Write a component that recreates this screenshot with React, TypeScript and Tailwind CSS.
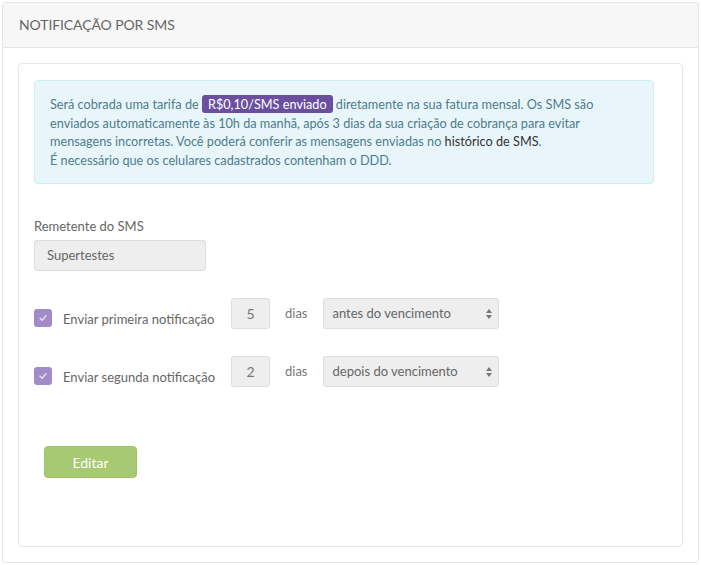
import React from "react";

function Check() {
  return (
    <span className="flex h-[18px] w-[18px] shrink-0 items-center justify-center rounded-[3px] bg-[#a28cc8]">
      <svg width="10" height="10" viewBox="0 0 10 10">
        <path d="M2 5.2 L4.1 7.2 L8 2.8" fill="none" stroke="#e6def2" strokeWidth="1.5" strokeLinecap="round" strokeLinejoin="round" />
      </svg>
    </span>
  );
}

function Arrows() {
  return (
    <svg width="8" height="12" viewBox="0 0 8 12" className="shrink-0">
      <path d="M4 1 L7 5 L1 5 Z" fill="#777" />
      <path d="M4 11 L7 7 L1 7 Z" fill="#777" />
    </svg>
  );
}

function Row({ label, num, sel }: { label: string; num: string; sel: string }) {
  return (
    <div className="flex items-start">
      <div className="mt-[11px] flex h-[18px] w-[197px] shrink-0 items-center gap-[11px]">
        <Check />
        <span className="whitespace-nowrap pt-[1px] text-[13px] leading-[18px] text-[#666]">{label}</span>
      </div>
      <div className="flex items-center">
        <div className="flex h-[31px] w-[39px] items-center justify-center rounded-[3px] border border-[#dddddd] bg-[#eeeeee] text-[14px] text-[#777]">
          {num}
        </div>
        <span className="ml-[15px] text-[13px] text-[#777]">dias</span>
        <div className="ml-[15px] flex h-[31px] w-[176px] items-center justify-between rounded-[3px] border border-[#dddddd] bg-[#eeeeee] pl-[9px] pr-[5px] text-[13px] text-[#666]">
          <span>{sel}</span>
          <Arrows />
        </div>
      </div>
    </div>
  );
}

export default function App() {
  return (
    <div className="bg-white p-[2px] font-['Lato','Liberation_Sans',sans-serif]">
      <div className="rounded-[3px] border border-[#e6e6e6] bg-white">
        <div className="flex h-[45px] items-center border-b border-[#e6e6e6] bg-[#f7f7f7] pl-[16px] pb-[1px]">
          <span className="text-[14px] tracking-[-0.1px] text-[#666]">NOTIFICAÇÃO POR SMS</span>
        </div>
        <div className="p-[15px]">
          <div className="h-[484px] rounded-[4px] border border-[#e6e6e6] px-[15px] pt-[16px]">
            <div className="w-[620px] rounded-[4px] border border-[#cdeff3] bg-[#e8f6fb] px-[15px] py-[14px] text-[12.7px] leading-[18.6px] text-[#4d7c8c]">
              Será cobrada uma tarifa de{" "}
              <span className="inline-block rounded-[3px] bg-[#6a4f9f] px-[6px] leading-[18px] text-white">R$0,10/SMS enviado</span>{" "}
              diretamente na sua fatura mensal. Os SMS são enviados automaticamente às 10h da manhã, após 3 dias da sua criação de cobrança para evitar mensagens incorretas. Você poderá conferir as mensagens enviadas no{" "}
              <span className="text-[#333]">histórico de SMS</span>.
              <br />
              É necessário que os celulares cadastrados contenham o DDD.
            </div>

            <div className="mt-[33px] text-[13px] leading-[18px] text-[#666]">Remetente do SMS</div>
            <div className="mt-[5px] flex h-[31px] w-[172px] items-center rounded-[3px] border border-[#dddddd] bg-[#eeeeee] pl-[12px] text-[13px] text-[#666]">
              Supertestes
            </div>

            <div className="mt-[27px] flex flex-col gap-[27px]">
              <Row label="Enviar primeira notificação" num="5" sel="antes do vencimento" />
              <Row label="Enviar segunda notificação" num="2" sel="depois do vencimento" />
            </div>

            <button className="ml-[10px] mt-[59px] flex h-[32px] w-[93px] items-center justify-center rounded-[4px] border border-[#9dc260] bg-[#a7c972] text-[14px] text-white">
              Editar
            </button>
          </div>
        </div>
      </div>
    </div>
  );
}
